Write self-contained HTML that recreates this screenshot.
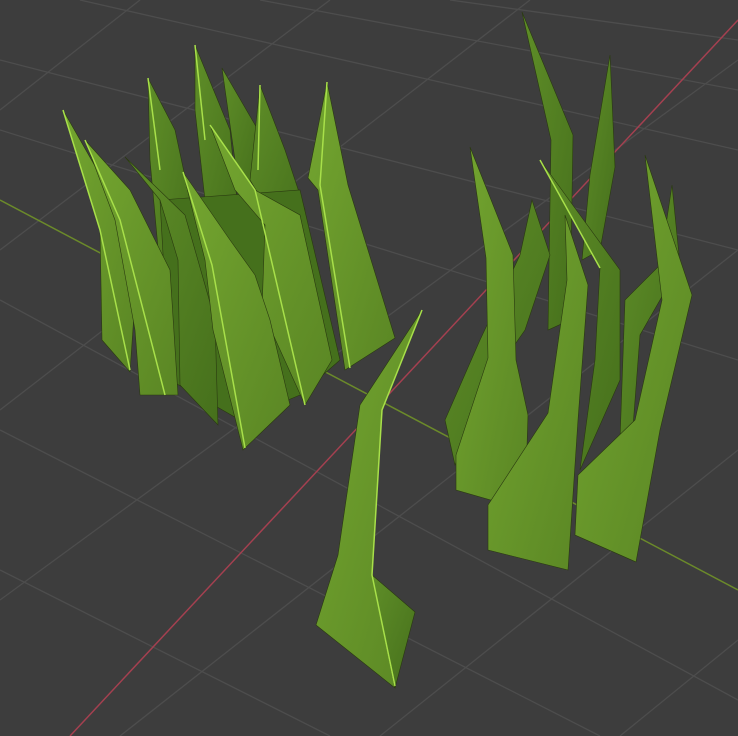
<!DOCTYPE html>
<html><head><style>html,body{margin:0;padding:0;background:#3d3d3d;overflow:hidden}svg{display:block}</style></head>
<body>
<svg width="738" height="736" viewBox="0 0 738 736" xmlns="http://www.w3.org/2000/svg">
<defs>
<linearGradient id="g" x1="0" y1="0" x2="1" y2="1"><stop offset="0" stop-color="#74a630"/><stop offset="1" stop-color="#5a8624"/></linearGradient>
<linearGradient id="d" x1="0" y1="0" x2="1" y2="1"><stop offset="0" stop-color="#5f8e28"/><stop offset="1" stop-color="#46701c"/></linearGradient>
</defs>
<rect width="738" height="736" fill="#3d3d3d"/>
<g stroke="#4d4d4d" stroke-width="1.3" fill="none">
<line x1="0" y1="60" x2="738" y2="250"/><line x1="0" y1="130" x2="738" y2="360"/>
<line x1="0" y1="300" x2="738" y2="700"/><line x1="0" y1="430" x2="600" y2="736"/>
<line x1="0" y1="570" x2="330" y2="736"/><line x1="80" y1="0" x2="738" y2="150"/>
<line x1="260" y1="0" x2="738" y2="90"/><line x1="450" y1="0" x2="738" y2="40"/>
<line x1="0" y1="110" x2="140" y2="0"/><line x1="0" y1="250" x2="330" y2="0"/>
<line x1="0" y1="410" x2="530" y2="0"/><line x1="0" y1="600" x2="738" y2="60"/>
<line x1="120" y1="736" x2="738" y2="250"/><line x1="380" y1="736" x2="738" y2="450"/>
<line x1="620" y1="736" x2="738" y2="640"/>
</g>
<line x1="0" y1="200" x2="738" y2="590" stroke="#6b8a2a" stroke-width="1.5"/>
<line x1="70" y1="736" x2="738" y2="20" stroke="#a44050" stroke-width="1.5"/>
<g stroke="#2a3a10" stroke-width="0.6">
<polygon points="195,45 195,110 205,200 240,230 230,130" fill="url(#d)"/>
<polygon points="222,68 235,160 250,190 258,130" fill="url(#d)"/>
<polygon points="260,85 250,180 280,230 305,210 285,150" fill="url(#d)"/>
<polygon points="148,78 150,160 160,270 178,300 190,200 175,130" fill="url(#d)"/>
<polygon points="160,200 300,190 340,360 300,395 240,420 170,380" fill="#45701c"/>
<polygon points="63,110 100,230 102,340 130,372 135,300 120,210" fill="url(#g)"/>
<polygon points="85,140 115,220 135,330 140,395 178,395 170,270 130,190" fill="url(#g)"/>
<polygon points="327,82 308,178 318,190 345,370 395,338 348,185" fill="url(#g)"/>
<polygon points="125,157 160,200 178,260 180,385 218,425 215,320 185,215" fill="url(#d)"/>
<polygon points="210,125 235,190 265,225 262,310 305,405 332,360 300,215 255,190" fill="url(#g)"/>
<polygon points="183,172 205,260 213,330 243,450 290,405 270,320 255,275 230,240" fill="url(#g)"/>
<polygon points="522,12 551,140 548,330 570,320 573,135" fill="url(#d)"/>
<polygon points="610,55 590,175 582,260 600,250 615,167" fill="url(#d)"/>
<polygon points="672,185 660,265 625,300 620,440 632,440 640,335 680,265" fill="url(#d)"/>
<polygon points="532,200 520,255 480,340 445,420 455,465 490,380 525,330 550,255" fill="url(#d)"/>
<polygon points="470,147 486,258 488,358 456,455 456,490 525,510 528,415 516,360 513,255" fill="url(#g)"/>
<polygon points="540,160 600,268 595,360 580,470 620,380 620,270" fill="url(#d)"/>
<polygon points="565,215 567,280 548,413 488,505 488,550 568,570 578,420 588,285" fill="url(#g)"/>
<polygon points="645,155 662,300 635,420 578,475 575,535 636,562 660,430 692,295" fill="url(#g)"/>
<polygon points="422,310 360,405 338,555 316,625 395,688 372,575 382,410" fill="url(#g)"/>
<polygon points="372,575 415,612 395,688" fill="url(#d)"/>
</g>
<g stroke="#a8e04a" stroke-width="1.5" fill="none">
<polyline points="63,110 100,230 130,370"/><polyline points="85,140 120,220 165,395"/>
<polyline points="327,82 320,185 350,368"/><polyline points="183,172 212,265 245,448"/>
<polyline points="210,125 255,190 305,405"/><polyline points="195,45 205,140"/>
<polyline points="148,78 160,170"/><polyline points="260,85 258,170"/>
<polyline points="422,310 382,410 372,575 395,686"/>
<polyline points="540,160 600,268"/>
</g>
</svg>
</body></html>
